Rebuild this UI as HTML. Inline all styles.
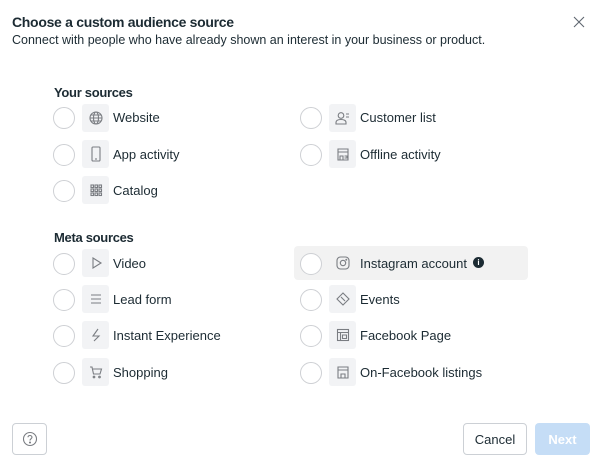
<!DOCTYPE html>
<html><head><style>
*{margin:0;padding:0;box-sizing:border-box}
body{width:600px;height:467px;background:#fff;font-family:"Liberation Sans",sans-serif;color:#1c1e21;position:relative;overflow:hidden}
.a{position:absolute}
.t{left:12px;top:14px;font-size:14px;font-weight:bold;color:#1c2b33;letter-spacing:-0.3px}
.s{left:12px;top:33px;font-size:12.5px;color:#1c2b33}
.h{font-size:13px;font-weight:bold;color:#1c2b33;letter-spacing:-0.3px}
.r{width:22px;height:22px;border:1px solid #ced0d4;border-radius:50%;background:#fff}
.ib{width:27px;height:28px;background:#f2f3f5;border-radius:3px;display:flex;align-items:center;justify-content:center}
.l{font-size:13px;color:#1c2b33}
svg{stroke:#7a7d82;fill:none;stroke-width:1.1}
.btn{border:1px solid #ccd0d5;border-radius:4px;background:#fff;display:flex;align-items:center;justify-content:center;font-size:13px}
</style></head><body>
<div class="a t">Choose a custom audience source</div>
<div class="a s">Connect with people who have already shown an interest in your business or product.</div>
<svg class="a" style="left:573px;top:16px" width="12" height="12" viewBox="0 0 12 12"><path d="M1 1L11 11M11 1L1 11" stroke="#606770"/></svg>
<div class="a h" style="left:54px;top:85px">Your sources</div>
<div class="a h" style="left:54px;top:230px">Meta sources</div>
<div class="a" style="left:294px;top:246px;width:234px;height:34px;background:#f2f2f2;border-radius:4px"></div>

<div class="a r" style="left:53px;top:107px"></div><div class="a ib" style="left:82px;top:104px"><svg width="14" height="14" viewBox="0 0 14 14"><circle cx="7" cy="7" r="6"/><ellipse cx="7" cy="7" rx="2.5" ry="6"/><path d="M1 7H13M2 4H12M2 10H12"/></svg></div><div class="a l" style="left:113px;top:110px">Website</div>
<div class="a r" style="left:53px;top:144px"></div><div class="a ib" style="left:82px;top:140px"><svg width="14" height="16" viewBox="0 0 14 16"><rect x="3" y="1" width="8" height="14" rx="1"/><path d="M6 13H8"/></svg></div><div class="a l" style="left:113px;top:147px">App activity</div>
<div class="a r" style="left:53px;top:180px"></div><div class="a ib" style="left:82px;top:176px"><svg width="14" height="14" viewBox="0 0 14 14" stroke-width="0.9"><rect x="2" y="2" width="2.5" height="2.5"/><rect x="6" y="2" width="2.5" height="2.5"/><rect x="10" y="2" width="2.5" height="2.5"/><rect x="2" y="6" width="2.5" height="2.5"/><rect x="6" y="6" width="2.5" height="2.5"/><rect x="10" y="6" width="2.5" height="2.5"/><rect x="2" y="10" width="2.5" height="2.5"/><rect x="6" y="10" width="2.5" height="2.5"/><rect x="10" y="10" width="2.5" height="2.5"/></svg></div><div class="a l" style="left:113px;top:183px">Catalog</div>

<div class="a r" style="left:53px;top:253px"></div><div class="a ib" style="left:82px;top:249px"><svg width="14" height="14" viewBox="0 0 14 14"><path d="M4 2L12 7L4 12Z"/></svg></div><div class="a l" style="left:113px;top:256px">Video</div>
<div class="a r" style="left:53px;top:289px"></div><div class="a ib" style="left:82px;top:285px"><svg width="14" height="14" viewBox="0 0 14 14"><path d="M2 3H12M2 7H12M2 11H12"/></svg></div><div class="a l" style="left:113px;top:292px">Lead form</div>
<div class="a r" style="left:53px;top:325px"></div><div class="a ib" style="left:82px;top:321px"><svg width="14" height="14" viewBox="0 0 14 14"><path d="M9 1L4 8H10L5 13"/></svg></div><div class="a l" style="left:113px;top:328px">Instant Experience</div>
<div class="a r" style="left:53px;top:362px"></div><div class="a ib" style="left:82px;top:358px"><svg width="14" height="14" viewBox="0 0 14 14"><path d="M1 2H3L4.5 9H11L12.5 4H4"/><circle cx="5" cy="12" r="0.8"/><circle cx="10.5" cy="12" r="0.8"/></svg></div><div class="a l" style="left:113px;top:365px">Shopping</div>

<div class="a r" style="left:300px;top:107px"></div><div class="a ib" style="left:329px;top:104px"><svg width="16" height="14" viewBox="0 0 16 14"><circle cx="6" cy="4.5" r="2.8"/><path d="M1 13V11.5C1 9.5 3 8.5 6 8.5S11 9.5 11 11.5V13Z"/><path d="M11 3H14M11 6H14"/></svg></div><div class="a l" style="left:360px;top:110px">Customer list</div>
<div class="a r" style="left:300px;top:144px"></div><div class="a ib" style="left:329px;top:140px"><svg width="14" height="14" viewBox="0 0 14 14"><path d="M2 2H12V5H2ZM2 5V13H12V5M4 13V9H7V13M8.5 9H11V11H8.5"/></svg></div><div class="a l" style="left:360px;top:147px">Offline activity</div>

<div class="a r" style="left:300px;top:253px"></div><div class="a" style="left:329px;top:249px;width:27px;height:28px;display:flex;align-items:center;justify-content:center"><svg width="14" height="14" viewBox="0 0 14 14"><rect x="1" y="1" width="12" height="12" rx="3.5"/><circle cx="7" cy="7" r="2.7"/><circle cx="10.3" cy="3.7" r="0.4"/></svg></div><div class="a l" style="left:360px;top:256px">Instagram account</div>
<div class="a" style="left:473px;top:257px;width:11px;height:11px;border-radius:50%;background:#1c2b33;color:#fff;font-size:8px;font-weight:bold;text-align:center;line-height:11px">i</div>
<div class="a r" style="left:300px;top:289px"></div><div class="a ib" style="left:329px;top:285px"><svg width="14" height="14" viewBox="0 0 14 14"><path d="M7 1L13 7L7 13L1 7ZM5 5L9 9"/></svg></div><div class="a l" style="left:360px;top:292px">Events</div>
<div class="a r" style="left:300px;top:325px"></div><div class="a ib" style="left:329px;top:321px"><svg width="14" height="14" viewBox="0 0 14 14"><rect x="1.5" y="1.5" width="11" height="11"/><path d="M1.5 4.5H12.5M4.5 4.5V12.5M6.5 7H10.5V10.5H6.5Z"/></svg></div><div class="a l" style="left:360px;top:328px">Facebook Page</div>
<div class="a r" style="left:300px;top:362px"></div><div class="a ib" style="left:329px;top:358px"><svg width="14" height="14" viewBox="0 0 14 14"><path d="M2 2H12V5H2ZM2 5V13H12V5M5 13V9H9V13"/></svg></div><div class="a l" style="left:360px;top:365px">On-Facebook listings</div>

<div class="a btn" style="left:12px;top:423px;width:35px;height:32px"><svg width="16" height="16" viewBox="0 0 16 16" stroke="#444"><circle cx="8" cy="8" r="6.5"/><path d="M6 6.3C6 5 7 4.5 8 4.5S10 5.2 10 6.3C10 7.6 8 7.8 8 9.5"/><circle cx="8" cy="11.5" r="0.5"/></svg></div>
<div class="a btn" style="left:463px;top:423px;width:64px;height:32px;color:#1c2b33">Cancel</div>
<div class="a btn" style="left:535px;top:423px;width:55px;height:32px;border:none;background:#c5ddf6;color:#fff;font-weight:bold">Next</div>
</body></html>
